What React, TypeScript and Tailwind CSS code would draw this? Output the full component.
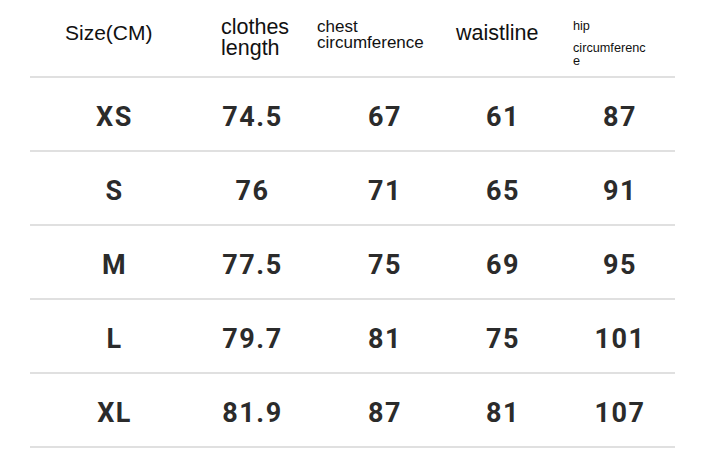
import React from "react";

const rows = [
  ["XS", "74.5", "67", "61", "87"],
  ["S", "76", "71", "65", "91"],
  ["M", "77.5", "75", "69", "95"],
  ["L", "79.7", "81", "75", "101"],
  ["XL", "81.9", "87", "81", "107"],
];

// widths chosen so each column's centre sits where the reference has it
const colWidths = ["w-[169px]", "w-[107px]", "w-[158px]", "w-[78px]", "w-[156px]"];

const App = () => {
  return (
    <div className="w-[727px] h-[449px] bg-white overflow-hidden">
      <div className="ml-[30px] w-[645px]">
        {/* header */}
        <div
          className="flex items-start h-[78px] border-b-2 border-[#e0e0e0] text-[#111]"
          style={{ fontFamily: '"Liberation Sans", Arial, sans-serif' }}
        >
          <div className="ml-[35px] w-[156px] shrink-0 mt-[21px] text-[21px] leading-[24px]">Size(CM)</div>
          <div className="w-[96px] shrink-0 mt-[17px] text-[21.5px] leading-[21px]">
            clothes
            <br />
            length
          </div>
          <div className="w-[139px] shrink-0 mt-[19px] text-[17px] leading-[16px]">
            chest
            <br />
            circumference
          </div>
          <div className="w-[117px] shrink-0 mt-[21px] text-[21.5px] leading-[24px]">waistline</div>
          <div className="w-[76px] shrink-0 mt-[20px] text-[12.7px] leading-[13px]">
            <div>hip</div>
            <div className="mt-[9px] w-[75px] break-all">circumference</div>
          </div>
        </div>

        {/* rows */}
        {rows.map((row) => (
          <div
            key={row[0]}
            className="flex h-[74px] border-b-2 border-[#e0e0e0] text-[#2b2b2b]"
            style={{ fontFamily: "Roboto, Arial, sans-serif" }}
          >
            {row.map((cell, i) => (
              <div
                key={i}
                className={`${colWidths[i]} shrink-0 flex items-center justify-center pt-[6px] text-[27px] font-bold tracking-[1.5px]`}
              >
                {cell}
              </div>
            ))}
          </div>
        ))}
      </div>
    </div>
  );
};

export default App;
